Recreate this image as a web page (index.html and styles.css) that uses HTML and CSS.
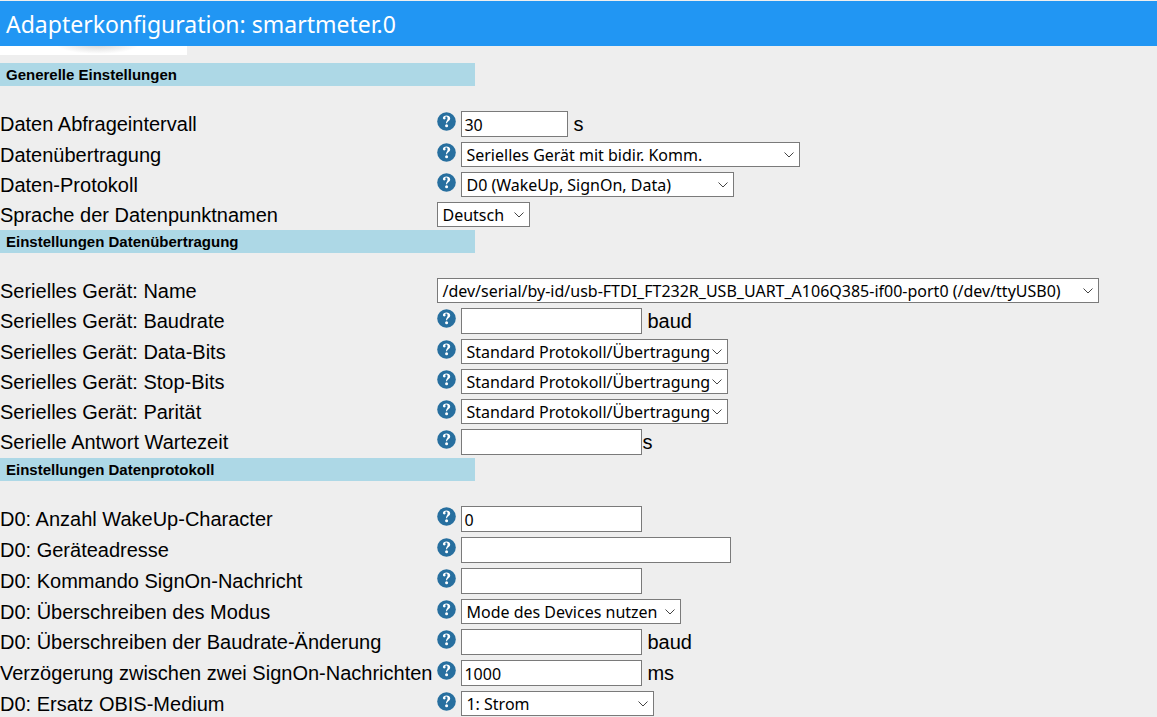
FILE: index.html
```html
<!DOCTYPE html>
<html lang="de">
<head>
<meta charset="utf-8">
<title>Adapterkonfiguration: smartmeter.0</title>
<link rel="stylesheet" href="styles.css">
</head>
<body>
<svg class="defs" width="0" height="0" aria-hidden="true">
  <symbol id="help" viewBox="0 0 19 19">
    <circle cx="9.500" cy="9.500" r="9.300" fill="#276f9f"/>
    <path d="M9.400 3.600C11.700 3.600 13.200 4.700 13.200 6.500C13.200 8.900 10.300 9 10.100 11.300H9C8.800 8.900 10.600 8.500 10.600 6.400C10.600 5.200 10 4.600 9.100 4.600C8.500 4.600 8.200 4.800 8.200 5.100C8.200 5.500 8.600 5.700 8.600 6.300C8.600 7 8.100 7.500 7.300 7.500C6.500 7.500 5.900 6.900 5.900 6.100C5.900 4.600 7.400 3.600 9.400 3.600Z" fill="#fff"/>
    <circle cx="9.600" cy="13.800" r="1.500" fill="#fff"/>
  </symbol>
</svg>
<header class="topbar"><h1>Adapterkonfiguration: smartmeter.0</h1></header>
<div class="logo"></div>
<form class="settings">
  <h2>Generelle Einstellungen</h2>
  <label for="interval">Daten Abfrageintervall</label>
  <div class="field"><svg class="help"><use href="#help"/></svg><input class="small" id="interval" value="30"><span class="unit">s</span></div>
  <label for="transport">Datenübertragung</label>
  <div class="field"><svg class="help"><use href="#help"/></svg><select class="w-transport" id="transport"><option>Serielles Gerät mit bidir. Komm.</option></select></div>
  <label for="protocol">Daten-Protokoll</label>
  <div class="field"><svg class="help"><use href="#help"/></svg><select class="w-protocol" id="protocol"><option>D0 (WakeUp, SignOn, Data)</option></select></div>
  <label for="lang">Sprache der Datenpunktnamen</label>
  <div class="field"><select class="w-lang" id="lang"><option>Deutsch</option></select></div>

  <h2>Einstellungen Datenübertragung</h2>
  <label for="device">Serielles Gerät: Name</label>
  <div class="field"><select class="w-device" id="device"><option>/dev/serial/by-id/usb-FTDI_FT232R_USB_UART_A106Q385-if00-port0 (/dev/ttyUSB0)</option></select></div>
  <label for="baud">Serielles Gerät: Baudrate</label>
  <div class="field"><svg class="help"><use href="#help"/></svg><input id="baud"><span class="unit">baud</span></div>
  <label for="databits">Serielles Gerät: Data-Bits</label>
  <div class="field"><svg class="help"><use href="#help"/></svg><select class="w-standard" id="databits"><option>Standard Protokoll/Übertragung</option></select></div>
  <label for="stopbits">Serielles Gerät: Stop-Bits</label>
  <div class="field"><svg class="help"><use href="#help"/></svg><select class="w-standard" id="stopbits"><option>Standard Protokoll/Übertragung</option></select></div>
  <label for="parity">Serielles Gerät: Parität</label>
  <div class="field"><svg class="help"><use href="#help"/></svg><select class="w-standard" id="parity"><option>Standard Protokoll/Übertragung</option></select></div>
  <label for="timeout">Serielle Antwort Wartezeit</label>
  <div class="field"><svg class="help"><use href="#help"/></svg><input id="timeout"><span class="unit tight">s</span></div>

  <h2>Einstellungen Datenprotokoll</h2>
  <label for="wakeup">D0: Anzahl WakeUp-Character</label>
  <div class="field"><svg class="help"><use href="#help"/></svg><input id="wakeup" value="0"></div>
  <label for="address">D0: Geräteadresse</label>
  <div class="field"><svg class="help"><use href="#help"/></svg><input class="large" id="address"></div>
  <label for="signon">D0: Kommando SignOn-Nachricht</label>
  <div class="field"><svg class="help"><use href="#help"/></svg><input id="signon"></div>
  <label for="mode">D0: Überschreiben des Modus</label>
  <div class="field"><svg class="help"><use href="#help"/></svg><select class="w-mode" id="mode"><option>Mode des Devices nutzen</option></select></div>
  <label for="changeover">D0: Überschreiben der Baudrate-Änderung</label>
  <div class="field"><svg class="help"><use href="#help"/></svg><input id="changeover"><span class="unit">baud</span></div>
  <label for="delay">Verzögerung zwischen zwei SignOn-Nachrichten</label>
  <div class="field"><svg class="help"><use href="#help"/></svg><input id="delay" value="1000"><span class="unit">ms</span></div>
  <label for="medium">D0: Ersatz OBIS-Medium</label>
  <div class="field"><svg class="help"><use href="#help"/></svg><select class="w-medium" id="medium"><option>1: Strom</option></select></div>
</form>
</body>
</html>
```
FILE: styles.css
```css
* { box-sizing: border-box; }

body {
  margin: 0;
  background: #eee;
  color: #000;
  font: 20px/24px "Liberation Sans", Arial, sans-serif;
}

.defs { position: absolute; }

.topbar {
  border-top: 1px solid #eee;
  padding: 0 6px;
  background: #2196f3;
  color: #fff;
}

.topbar h1 {
  margin: 0;
  padding: 3px 0 2px;
  font: 400 23px/40px "Noto Sans", sans-serif;
}

.logo {
  width: 187px;
  height: 9px;
  background: radial-gradient(ellipse 42px 10px at 98px -2px, #d4d4d4, #eee 60%, #fff) #fff;
}

.settings {
  display: grid;
  grid-template-columns: max-content 1fr;
  gap: 5px;
  padding-top: 8px;
}

h2 {
  grid-column: 1 / -1;
  width: 100%;
  max-width: 475px;
  margin: -2px 0 20px;
  padding: 0 6px;
  background: #add8e6;
  font-size: 15px;
  line-height: 23px;
}

h2:first-child { margin-top: 0; }

label { align-self: center; }

.field {
  display: flex;
  align-items: flex-start;
}

.help {
  flex: none;
  width: 19px;
  height: 19px;
  margin: 1px 5px 0 0;
}

input,
select {
  margin: 0;
  border: 1px solid #7a7a7a;
  border-radius: 0;
  background-color: #fff;
  color: #000;
  font: 16px/22px "Noto Sans", sans-serif;
}

input {
  width: 181px;
  height: 26px;
  padding: 1px 2px 0;
}

.small { width: 107px; }
.large { width: 270px; }

select {
  height: 25px;
  padding: 0 16px 0 4px;
  appearance: none;
  background-image: url("data:image/svg+xml,%3Csvg xmlns='http://www.w3.org/2000/svg' width='10' height='6'%3E%3Cpath d='M.5.5 5 5 9.500.5' fill='none' stroke='%23444'/%3E%3C/svg%3E");
  background-position: right 5px center;
  background-repeat: no-repeat;
}

.w-transport { width: 339px; }
.w-protocol { width: 273px; }
.w-lang { width: 93px; }
.w-device { width: 662px; }
.w-standard { width: 267px; }
.w-mode { width: 220px; }
.w-medium { width: 193px; }

.unit { padding: 1px 0 0 5px; }
.tight { padding-left: 0; }
```
